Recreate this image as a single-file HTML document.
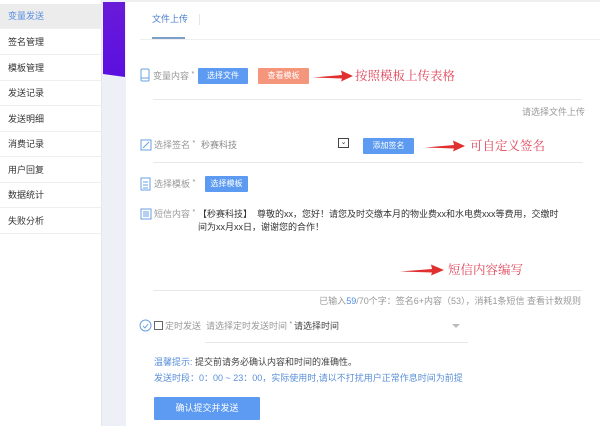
<!DOCTYPE html>
<html><head><meta charset="utf-8"><style>
*{margin:0;padding:0;box-sizing:border-box}
body{width:600px;height:426px;overflow:hidden;background:#fff;font-family:"Liberation Sans","Noto Sans CJK SC",sans-serif;font-size:9px;color:#333;position:relative}
.a{position:absolute;white-space:nowrap;line-height:12px}
.st{font-size:7px;position:relative;top:-3px;color:#888}
.side{position:absolute;left:0;top:0;width:102px;height:426px;background:#fff;border-right:1px solid #e6e6e6}
.item{position:absolute;left:0;width:102px;height:25px;line-height:25px;padding-left:8px;font-size:9px;color:#333;border-bottom:1px solid #eee}
.strip{position:absolute;left:102px;top:0;width:24px;height:426px;background:#eef0f7}
.btn{position:absolute;height:16px;line-height:16px;text-align:center;color:#fff;font-size:8px;border-radius:1px}
.blue{background:#5c9bf1}
.line{position:absolute;height:1px;background:#e8e8e8}
.lbl{color:#999}
.red{color:#e0455a;font-family:"Noto Serif CJK SC","Liberation Serif",serif;font-size:12.5px;line-height:16px}
</style></head><body>
<div class="side">
<div class="item" style="top:4px;background:#ececec;color:#5b8fe0">变量发送</div>
<div class="item" style="top:30px">签名管理</div>
<div class="item" style="top:56px">模板管理</div>
<div class="item" style="top:81px">发送记录</div>
<div class="item" style="top:107px">发送明细</div>
<div class="item" style="top:132px">消费记录</div>
<div class="item" style="top:158px">用户回复</div>
<div class="item" style="top:183px">数据统计</div>
<div class="item" style="top:209px">失败分析</div>
</div>
<div class="strip"></div>
<div class="a" style="left:103px;top:2px;width:22px;height:75px;background:linear-gradient(170deg,#6a1bd8,#5a0fe0);clip-path:polygon(0 0,100% 0,100% 100%,0 96%)"></div>
<div class="a" style="left:126px;top:0;width:474px;height:2px;background:#f0f0f0"></div>
<div class="a" style="left:152px;top:13px;font-size:9px;color:#4a7fc8">文件上传</div>
<div class="a" style="left:199px;top:14px;width:1px;height:11px;background:#e6e6e6"></div>
<div class="a" style="left:152px;top:37px;width:33px;height:2px;background:#7aa0c8"></div>
<div class="line" style="left:140px;top:39px;width:460px;background:#eee"></div>

<svg class="a" style="left:140px;top:68px" width="10" height="14"><rect x="1" y="1" width="8" height="12" rx="1" fill="none" stroke="#6aa0e0"/><line x1="1" y1="10" x2="9" y2="10" stroke="#6aa0e0"/></svg>
<div class="a lbl" style="left:153px;top:70px">变量内容 <span class="st">*</span></div>
<div class="btn blue" style="left:198px;top:68px;width:50px">选择文件</div>
<div class="btn" style="left:258px;top:68px;width:51px;background:#f5957c">查看模板</div>
<svg class="a" style="left:312px;top:69px" width="42" height="14"><path d="M1 8.5 L30 6 L29 1.5 L41 7 L29 12.5 L30 9.5 Z" fill="#e03030"/></svg>
<div class="a red" style="left:355px;top:67px">按照模板上传表格</div>
<div class="line" style="left:153px;top:99px;width:429px"></div>
<div class="a lbl" style="left:522px;top:106px">请选择文件上传</div>

<svg class="a" style="left:140px;top:139px" width="12" height="12"><rect x="1" y="1" width="10" height="10" fill="none" stroke="#6aa0e0"/><path d="M3 9 L9 3" stroke="#6aa0e0"/></svg>
<div class="a lbl" style="left:154px;top:139px">选择签名 <span class="st">*</span></div>
<div class="a" style="left:201px;top:139px;color:#888">秒赛科技</div>
<div class="a" style="left:338px;top:138px;width:11px;height:10px;border:1px solid #444;font-size:7px;line-height:8px;text-align:center">⌄</div>
<div class="line" style="left:153px;top:162px;width:430px"></div>
<div class="btn blue" style="left:363px;top:138px;width:51px">添加签名</div>
<svg class="a" style="left:424px;top:139px" width="42" height="14"><path d="M1 8.5 L30 6 L29 1.5 L41 7 L29 12.5 L30 9.5 Z" fill="#e03030"/></svg>
<div class="a red" style="left:470px;top:137px">可自定义签名</div>

<svg class="a" style="left:139px;top:177px" width="13" height="14"><rect x="2" y="1" width="9" height="12" fill="none" stroke="#6aa0e0"/><path d="M4 5h5M4 8h5M4 11h5" stroke="#6aa0e0"/></svg>
<div class="a lbl" style="left:154px;top:178px">选择模板 <span class="st">*</span></div>
<div class="btn blue" style="left:205px;top:176px;width:43px">选择模板</div>

<svg class="a" style="left:140px;top:208px" width="12" height="12"><rect x="1" y="1" width="10" height="10" fill="none" stroke="#6aa0e0"/><path d="M3 4h6M3 6h6M3 8h6" stroke="#6aa0e0"/></svg>
<div class="a lbl" style="left:154px;top:208px">短信内容 <span class="st">*</span></div>
<div class="a" style="left:198px;top:208px;color:#333">【秒赛科技】&nbsp; 尊敬的xx，您好！请您及时交缴本月的物业费xx和水电费xxx等费用，交缴时</div>
<div class="a" style="left:198px;top:221px;color:#333">间为xx月xx日，谢谢您的合作！</div>
<svg class="a" style="left:399px;top:263px" width="46" height="14"><path d="M1 8.5 L33 6 L32 1.5 L45 7 L32 12.5 L33 9.5 Z" fill="#e03030"/></svg>
<div class="a red" style="left:448px;top:261px">短信内容编写</div>
<div class="line" style="left:153px;top:290px;width:429px"></div>
<div class="a" style="right:19px;top:295px;color:#999">已输入<span style="color:#4a8ae0">59</span>/70个字：签名6+内容（53），消耗1条短信 查看计数规则</div>

<svg class="a" style="left:139px;top:319px" width="13" height="13"><circle cx="6.5" cy="6.5" r="5.5" fill="none" stroke="#6aa0e0"/><path d="M4 7l2 2 3-4" stroke="#6aa0e0" fill="none"/></svg>
<div class="a" style="left:154px;top:321px;width:9px;height:9px;border:1px solid #666"></div>
<div class="a lbl" style="left:165px;top:320px">定时发送&nbsp; 请选择定时发送时间 <span class="st">*</span></div>
<div class="a" style="left:294px;top:320px;color:#444">请选择时间</div>
<div class="a" style="left:452px;top:324px;width:0;height:0;border-left:4px solid transparent;border-right:4px solid transparent;border-top:4px solid #bbb"></div>
<div class="line" style="left:205px;top:342px;width:263px"></div>
<div class="a" style="left:154px;top:356px;color:#5a8fd8">温馨提示: <span style="color:#444">提交前请务必确认内容和时间的准确性。</span></div>
<div class="a" style="left:154px;top:372px;color:#5a8fd8">发送时段：0：00 ~ 23：00，实际使用时,请以不打扰用户正常作息时间为前提</div>
<div class="btn blue" style="left:154px;top:397px;width:106px;height:23px;line-height:23px;font-size:9px">确认提交并发送</div>
</body></html>
